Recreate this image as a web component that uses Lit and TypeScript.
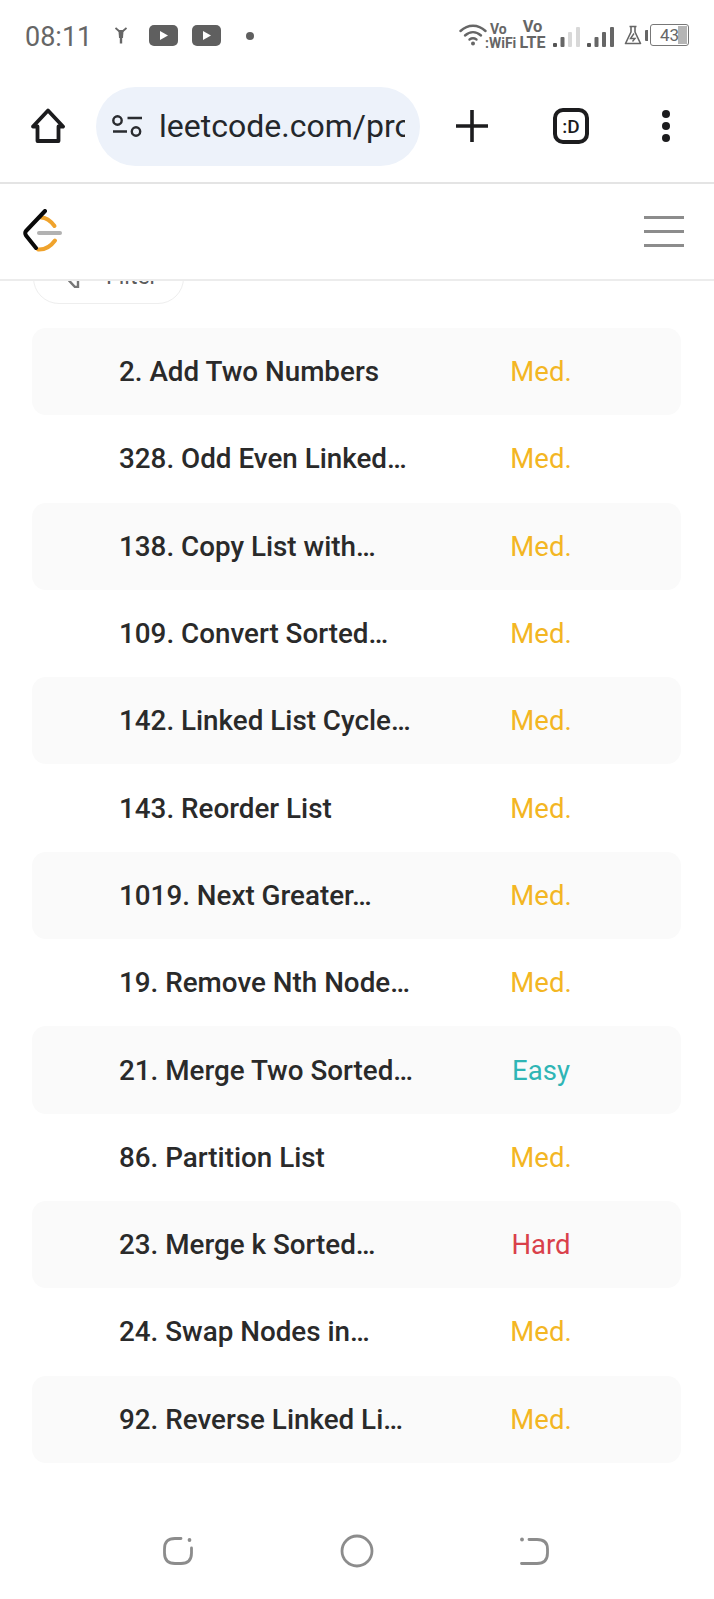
import { LitElement, html, css, svg } from "lit";
import { customElement } from "lit/decorators.js";

const problems: [string, string][] = [
  ["2. Add Two Numbers", "Med."],
  ["328. Odd Even Linked…", "Med."],
  ["138. Copy List with…", "Med."],
  ["109. Convert Sorted…", "Med."],
  ["142. Linked List Cycle…", "Med."],
  ["143. Reorder List", "Med."],
  ["1019. Next Greater…", "Med."],
  ["19. Remove Nth Node…", "Med."],
  ["21. Merge Two Sorted…", "Easy"],
  ["86. Partition List", "Med."],
  ["23. Merge k Sorted…", "Hard"],
  ["24. Swap Nodes in…", "Med."],
  ["92. Reverse Linked Li…", "Med."],
];

const playIcon = html`<svg class="play" width="29" height="21" viewBox="0 0 29 21">
  <rect width="29" height="21" rx="5" fill="#5f5f5f" />
  <path d="M11 6 L19 10.5 L11 15 Z" fill="#fff" />
</svg>`;

const bars = (levels: string[]) => html`<svg class="bars" width="27" height="20" viewBox="0 0 27 20">
  ${[
    [0, 16, 4],
    [7.5, 10, 10],
    [15, 5, 15],
    [23, 0, 20],
  ].map(([x, y, h], i) => svg`<rect x=${x} y=${y} width="4" height=${h} rx="1" fill=${levels[i]} />`)}
</svg>`;

@customElement("app-root")
export class AppRoot extends LitElement {
  render() {
    return html`
      <div class="status">
        <span class="time">08:11</span>
        <svg class="bike" width="12" height="17" viewBox="0 0 12 17">
          <path d="M0.5 1 L4 4 H8 L11.5 1" fill="none" stroke="#666" stroke-width="1.8" />
          <path d="M3.5 4 H8.5 L8 11 H4 Z" fill="#666" />
          <path d="M6 11 V16.5" stroke="#666" stroke-width="2.4" />
        </svg>
        ${playIcon} ${playIcon}
        <span class="dot"></span>
        <div class="status-right">
          <svg class="wifi" width="28" height="23" viewBox="0 0 28 23">
            <g fill="none" stroke="#666" stroke-width="2.4" stroke-linecap="round">
              <path d="M1.5 8 C9 1 19 1 26.5 8" />
              <path d="M6 12.5 C11 8 17 8 22 12.5" />
              <path d="M10.5 16.5 C13 14.8 15 14.8 17.5 16.5" />
            </g>
            <circle cx="14" cy="20.5" r="2" fill="#666" />
          </svg>
          <div class="net small"><span>Vo</span><span>:WiFi</span></div>
          <div class="net large"><span>Vo</span><span>LTE</span></div>
          ${bars(["#555", "#666", "#d8d8d8", "#d8d8d8"])} ${bars(["#555", "#666", "#666", "#666"])}
          <svg class="flask" width="18" height="20" viewBox="0 0 18 20">
            <path d="M5.5 1.5 H12.5 M7 1.5 V7 L1.5 18.5 H16.5 L11 7 V1.5" fill="none" stroke="#666" stroke-width="1.6" stroke-linejoin="round" />
            <path d="M10 8.5 L6.5 13.5 H11 L8.5 16.5" fill="none" stroke="#666" stroke-width="1.4" />
          </svg>
          <div class="battery">
            <span class="cap"></span>
            <div class="cell"><span class="level"></span><span class="pct">43</span></div>
          </div>
        </div>
      </div>

      <div class="toolbar">
        <svg class="home" width="36" height="36" viewBox="0 0 36 36">
          <path d="M18 2.5 L33 18.5 H28.5 V33 H7.5 V18.5 H3 Z" fill="none" stroke="#1c1c1e" stroke-width="3.8" stroke-linejoin="round" />
        </svg>
        <div class="omnibox">
          <svg width="30" height="24" viewBox="0 0 30 24">
            <g fill="none" stroke="#2a2c30" stroke-width="2.4">
              <circle cx="5.5" cy="6.5" r="4.2" />
              <circle cx="24" cy="17.5" r="4.2" />
              <path d="M15.5 4 H30 M1 17.5 H15" />
            </g>
          </svg>
          <span class="url">leetcode.com/pro</span>
        </div>
        <svg class="plus" width="32" height="32" viewBox="0 0 32 32">
          <path d="M16 0 V32 M0 16 H32" stroke="#1c1c1e" stroke-width="3.6" />
        </svg>
        <div class="tabs">:D</div>
        <div class="menu"><i></i><i></i><i></i></div>
      </div>

      <header class="site">
        <svg width="40" height="46" viewBox="0 0 40 46">
          <g fill="none" stroke-width="4" stroke-linecap="round" stroke-linejoin="round">
            <path d="M18 8.5 C22 8.5 27 11 31.5 17" stroke="#f0a32c" />
            <path d="M32 31.5 C28 37 22 41 15 40.5" stroke="#f0a32c" />
            <path d="M22 2 L3 22 Q1.5 24 3 26.5 L13 39" stroke="#0a0a0a" />
            <path d="M16 24 H37" stroke="#b2b2b2" />
          </g>
        </svg>
        <div class="burger"><i></i><i></i><i></i></div>
      </header>

      <div class="filter-clip">
        <div class="filter">
          <svg width="12" height="20" viewBox="0 0 12 20">
            <path d="M0.5 12 L7 19 H10 V12" fill="none" stroke="#777" stroke-width="2.4" />
          </svg>
          <span>Filter</span>
        </div>
      </div>

      <main class="list">
        ${problems.map(
          ([title, level]) => html`
            <div class="row">
              <span class="title">${title}</span>
              <span class="level-tag ${level === "Easy" ? "easy" : level === "Hard" ? "hard" : "med"}">${level}</span>
            </div>
          `
        )}
      </main>

      <nav class="nav">
        <svg width="32" height="30" viewBox="0 0 32 30">
          <g fill="none" stroke="#8c8c8c" stroke-width="2.8" stroke-linecap="round">
            <path d="M19 2.5 H13 Q2.5 2.5 2.5 13 V17 Q2.5 27.5 13 27.5 H19 Q29.5 27.5 29.5 17 V12" />
          </g>
          <circle cx="27.5" cy="4" r="1.9" fill="#8c8c8c" />
        </svg>
        <svg width="34" height="34" viewBox="0 0 34 34">
          <circle cx="17" cy="17" r="15" fill="none" stroke="#8c8c8c" stroke-width="2.8" />
        </svg>
        <svg width="32" height="30" viewBox="0 0 32 30">
          <g fill="none" stroke="#8c8c8c" stroke-width="2.8" stroke-linecap="round">
            <path d="M10 3.5 H18 Q28.5 3.5 28.5 13 V17 Q28.5 27.5 18 27.5 H2.5" />
          </g>
          <circle cx="3" cy="3.5" r="1.9" fill="#8c8c8c" />
        </svg>
      </nav>
    `;
  }

  static styles = css`
    :host {
      display: flex;
      flex-direction: column;
      width: 714px;
      height: 1599px;
      overflow: hidden;
      background: #fff;
      font-family: Roboto, "Liberation Sans", sans-serif;
    }

    .status {
      display: flex;
      align-items: center;
      height: 70px;
      flex: none;
      padding: 0 25px;
      box-sizing: border-box;
    }
    .time {
      font-size: 27px;
      color: #666;
      margin-top: 3px;
      width: 66px;
      white-space: nowrap;
    }
    .bike {
      margin: 1px 0 0 24px;
    }
    .play {
      margin-left: 14px;
    }
    .bike + .play {
      margin-left: 22px;
    }
    .dot {
      width: 8px;
      height: 8px;
      border-radius: 50%;
      background: #5f5f5f;
      margin: 1px 0 0 25px;
    }
    .status-right {
      display: flex;
      align-items: center;
      margin-left: auto;
    }
    .wifi {
      margin-top: -1px;
    }
    .net {
      display: flex;
      flex-direction: column;
      font-weight: 700;
      color: #666;
      line-height: 1;
    }
    .net.small {
      font-size: 14px;
      width: 31px;
      margin: 2px 0 0 -2px;
      white-space: nowrap;
    }
    .net.small span:first-child {
      padding-left: 5px;
    }
    .net.large {
      align-items: center;
      font-size: 16.5px;
      width: 25px;
      margin-left: 4px;
    }
    .net.large span:last-child {
      font-size: 16px;
    }
    .bars {
      margin: 4px 0 0 8px;
    }
    .bars + .bars {
      margin-left: 7px;
    }
    .flask {
      margin-left: 10px;
    }
    .battery {
      display: flex;
      align-items: center;
      margin-left: 3px;
    }
    .cap {
      width: 3px;
      height: 11px;
      background: #666;
      border-radius: 1px 0 0 1px;
    }
    .cell {
      position: relative;
      display: flex;
      align-items: center;
      box-sizing: border-box;
      width: 39px;
      height: 22px;
      padding-left: 9px;
      border: 1.5px solid #777;
      border-radius: 3px;
      margin-left: 2px;
    }
    .level {
      position: absolute;
      top: 1px;
      right: 1px;
      bottom: 1px;
      width: 9px;
      background: #b5b5b5;
    }
    .pct {
      position: relative;
      font-size: 17px;
      color: #666;
    }

    .toolbar {
      position: relative;
      display: flex;
      align-items: center;
      height: 114px;
      flex: none;
      box-sizing: border-box;
      border-bottom: 2px solid #e4e4e4;
      padding: 0 0 0 30px;
    }
    .omnibox {
      display: flex;
      align-items: center;
      width: 324px;
      height: 79px;
      box-sizing: border-box;
      margin-left: 30px;
      padding: 0 15px 0 16px;
      border-radius: 40px;
      background: #edf2fa;
      overflow: hidden;
    }
    .omnibox svg {
      flex: none;
    }
    .url {
      margin-left: 17px;
      font-size: 32px;
      color: #24272b;
      white-space: nowrap;
      overflow: hidden;
    }
    .plus {
      margin-left: 36px;
    }
    .tabs {
      width: 36px;
      height: 36px;
      box-sizing: border-box;
      margin-left: 65px;
      border: 4px solid #1c1c1e;
      border-radius: 10px;
      display: flex;
      align-items: center;
      justify-content: center;
      font-size: 19px;
      font-weight: 500;
      color: #1c1c1e;
    }
    .menu {
      display: flex;
      flex-direction: column;
      gap: 4px;
      margin-left: 73px;
    }
    .menu i {
      width: 8px;
      height: 8px;
      border-radius: 50%;
      background: #1c1c1e;
    }

    .site {
      display: flex;
      align-items: center;
      justify-content: space-between;
      height: 97px;
      flex: none;
      box-sizing: border-box;
      border-bottom: 2px solid #ececec;
      padding: 0 30px 0 23px;
    }
    .burger {
      display: flex;
      flex-direction: column;
      gap: 11px;
    }
    .burger i {
      width: 40px;
      height: 3px;
      background: #8c8c8c;
    }

    .filter-clip {
      height: 47px;
      flex: none;
      overflow: hidden;
    }
    .filter {
      display: flex;
      align-items: center;
      gap: 26px;
      width: 151px;
      height: 56px;
      box-sizing: border-box;
      margin: -33px 0 0 33px;
      padding-left: 34px;
      border: 1.5px solid #eeeeee;
      border-radius: 26px;
      font-size: 23px;
      color: #5c5c5c;
    }
    .filter svg {
      margin-top: 4px;
    }

    .list {
      display: flex;
      flex-direction: column;
      flex: none;
      padding: 0 33px 0 32px;
    }
    .row {
      display: flex;
      align-items: center;
      height: 87.3px;
      box-sizing: border-box;
      padding: 0 80px 0 87px;
      border-radius: 14px;
    }
    .row:nth-child(odd) {
      background: #fafafa;
    }
    .title {
      flex: 1;
      font-size: 27.8px;
      font-weight: 500;
      color: #2a2a2a;
      white-space: nowrap;
    }
    .level-tag {
      width: 120px;
      text-align: center;
      font-size: 27.5px;
    }
    .med {
      color: #f3b623;
    }
    .easy {
      color: #2fb5b5;
    }
    .hard {
      color: #d9404a;
    }

    .nav {
      display: flex;
      justify-content: space-between;
      align-items: center;
      margin-top: auto;
      height: 80px;
      flex: none;
      box-sizing: border-box;
      padding: 0 163px 16px 162px;
    }
  `;
}
